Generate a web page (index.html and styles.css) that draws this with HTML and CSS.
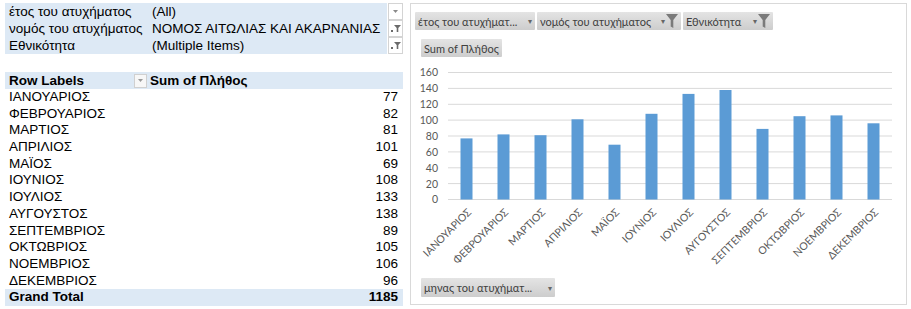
FILE: index.html
```html
<!DOCTYPE html>
<html lang="el">
  <head>
    <meta charset="UTF-8" />
    <title>Pivot - Πλήθος ατυχημάτων</title>
    <link rel="stylesheet" href="styles.css">
  </head>
  <body>
    <div class="page">
      <div class="pivot">
        <div class="filters">
          <div class="frow">
            <span class="fl">έτος του ατυχήματος</span>
            <span class="fv">(All)</span>
            <span class="fbtn"><svg width="7" height="5" viewBox="0 0 7 5"><path d="M1 1h5L3.5 4z" fill="#8a8a8a"/></svg></span>
          </div>
          <div class="frow">
            <span class="fl">νομός του ατυχήματος</span>
            <span class="fv">ΝΟΜΟΣ ΑΙΤΩΛΙΑΣ ΚΑΙ ΑΚΑΡΝΑΝΙΑΣ</span>
            <span class="fbtn"><svg width="10" height="9" viewBox="0 0 10 9"><rect x="0" y="6" width="2" height="2" fill="#6a6a6a"/><path d="M3 1h7L7.3 4v4H5.7V4z" fill="#6a6a6a"/></svg></span>
          </div>
          <div class="frow">
            <span class="fl">Εθνικότητα</span>
            <span class="fv">(Multiple Items)</span>
            <span class="fbtn"><svg width="10" height="9" viewBox="0 0 10 9"><rect x="0" y="6" width="2" height="2" fill="#6a6a6a"/><path d="M3 1h7L7.3 4v4H5.7V4z" fill="#6a6a6a"/></svg></span>
          </div>
        </div>

        <div class="table">
          <div class="hrow">
            <span class="hl">Row Labels <span class="hbtn"><svg width="7" height="5" viewBox="0 0 7 5"><path d="M1 1h5L3.5 4z" fill="#9a9a9a"/></svg></span></span>
            <span class="hv">Sum of Πλήθος</span>
          </div>
          <div class="row"><span>ΙΑΝΟΥΑΡΙΟΣ</span><span>77</span></div>
          <div class="row"><span>ΦΕΒΡΟΥΑΡΙΟΣ</span><span>82</span></div>
          <div class="row"><span>ΜΑΡΤΙΟΣ</span><span>81</span></div>
          <div class="row"><span>ΑΠΡΙΛΙΟΣ</span><span>101</span></div>
          <div class="row"><span>ΜΑΪΟΣ</span><span>69</span></div>
          <div class="row"><span>ΙΟΥΝΙΟΣ</span><span>108</span></div>
          <div class="row"><span>ΙΟΥΛΙΟΣ</span><span>133</span></div>
          <div class="row"><span>ΑΥΓΟΥΣΤΟΣ</span><span>138</span></div>
          <div class="row"><span>ΣΕΠΤΕΜΒΡΙΟΣ</span><span>89</span></div>
          <div class="row"><span>ΟΚΤΩΒΡΙΟΣ</span><span>105</span></div>
          <div class="row"><span>ΝΟΕΜΒΡΙΟΣ</span><span>106</span></div>
          <div class="row"><span>ΔΕΚΕΜΒΡΙΟΣ</span><span>96</span></div>
          <div class="row total"><span>Grand Total</span><span>1185</span></div>
        </div>
      </div>

      <div class="chart">
        <div class="fields">
          <span class="fbut w1">έτος του ατυχήματ... <i class="arr">▾</i></span>
          <span class="fbut w2">νομός του ατυχήματος <i class="arr">▾</i><svg class="funnel" width="12" height="14" viewBox="0 0 12 14"><path d="M0 0h12L7.3 6v8L4.7 12.5V6z" fill="#7a7a7a"/></svg></span>
          <span class="fbut w3">Εθνικότητα <i class="arr">▾</i><svg class="funnel" width="12" height="14" viewBox="0 0 12 14"><path d="M0 0h12L7.3 6v8L4.7 12.5V6z" fill="#7a7a7a"/></svg></span>
        </div>
        <div class="vals"><span class="fbut">Sum of Πλήθος</span></div>

        <svg class="plot" width="495" height="214" viewBox="0 0 495 214">
          <g stroke="#d9d9d9" stroke-width="1">
            <line x1="37" x2="481" y1="10.5" y2="10.5"/>
            <line x1="37" x2="481" y1="26.4" y2="26.4"/>
            <line x1="37" x2="481" y1="42.3" y2="42.3"/>
            <line x1="37" x2="481" y1="58.1" y2="58.1"/>
            <line x1="37" x2="481" y1="74" y2="74"/>
            <line x1="37" x2="481" y1="89.9" y2="89.9"/>
            <line x1="37" x2="481" y1="105.8" y2="105.8"/>
            <line x1="37" x2="481" y1="121.6" y2="121.6"/>
            <line x1="37" x2="481" y1="137.5" y2="137.5"/>
          </g>
          <g class="ylab" text-anchor="end">
            <text x="27" y="14">160</text>
            <text x="27" y="30">140</text>
            <text x="27" y="46">120</text>
            <text x="27" y="62">100</text>
            <text x="27" y="78">80</text>
            <text x="27" y="93.5">60</text>
            <text x="27" y="109.5">40</text>
            <text x="27" y="125.5">20</text>
            <text x="27" y="141">0</text>
          </g>
          <g fill="#5b9bd5">
            <rect x="49.5" y="76.4" width="12" height="61.1"/>
            <rect x="86.5" y="72.4" width="12" height="65.1"/>
            <rect x="123.5" y="73.2" width="12" height="64.3"/>
            <rect x="160.5" y="57.3" width="12" height="80.2"/>
            <rect x="197.5" y="82.7" width="12" height="54.8"/>
            <rect x="234.5" y="51.8" width="12" height="85.7"/>
            <rect x="271.5" y="31.9" width="12" height="105.6"/>
            <rect x="308.5" y="28" width="12" height="109.5"/>
            <rect x="345.5" y="66.9" width="12" height="70.6"/>
            <rect x="382.5" y="54.2" width="12" height="83.3"/>
            <rect x="419.5" y="53.4" width="12" height="84.1"/>
            <rect x="456.5" y="61.3" width="12" height="76.2"/>
          </g>
          <g class="xlab" text-anchor="end">
            <text transform="translate(61,151) rotate(-45)">ΙΑΝΟΥΑΡΙΟΣ</text>
            <text transform="translate(98,151) rotate(-45)">ΦΕΒΡΟΥΑΡΙΟΣ</text>
            <text transform="translate(135,151) rotate(-45)">ΜΑΡΤΙΟΣ</text>
            <text transform="translate(172,151) rotate(-45)">ΑΠΡΙΛΙΟΣ</text>
            <text transform="translate(209,151) rotate(-45)">ΜΑΪΟΣ</text>
            <text transform="translate(246,151) rotate(-45)">ΙΟΥΝΙΟΣ</text>
            <text transform="translate(283,151) rotate(-45)">ΙΟΥΛΙΟΣ</text>
            <text transform="translate(320,151) rotate(-45)">ΑΥΓΟΥΣΤΟΣ</text>
            <text transform="translate(357,151) rotate(-45)">ΣΕΠΤΕΜΒΡΙΟΣ</text>
            <text transform="translate(394,151) rotate(-45)">ΟΚΤΩΒΡΙΟΣ</text>
            <text transform="translate(431,151) rotate(-45)">ΝΟΕΜΒΡΙΟΣ</text>
            <text transform="translate(468,151) rotate(-45)">ΔΕΚΕΜΒΡΙΟΣ</text>
          </g>
        </svg>

        <div class="axis-field"><span class="fbut w4">μηνας του ατυχήματ... <i class="arr">▾</i></span></div>
      </div>
    </div>
  </body>
</html>
```

FILE: styles.css
```css
body {
  margin: 0;
  font-family: "Liberation Sans", Arial, sans-serif;
  font-size: 13.5px;
  color: #000;
  background-color: #fff;
}
.page {
  display: flex;
  padding: 3px 0 0 5px;
  gap: 7px;
}

/* pivot table */
.pivot {
  width: 398px;
}
.frow {
  display: grid;
  grid-template-columns: 147px 1fr 16px;
  height: 17px;
  line-height: 17px;
}
.fl, .fv {
  background-color: #dde9f5;
  white-space: nowrap;
}
.fl {
  padding-left: 4px;
}
.fbtn {
  margin-left: 1px;
  border: 1px solid #d4d4d4;
  background-color: #fff;
  display: flex;
  align-items: center;
  justify-content: center;
}
.table {
  margin-top: 18px;
}
.hrow {
  display: grid;
  grid-template-columns: 142px 1fr;
  height: 17px;
  line-height: 17px;
  background-color: #dde9f5;
  font-weight: bold;
}
.hl {
  display: flex;
  align-items: center;
  padding-left: 4px;
}
.hbtn {
  margin-left: auto;
  width: 13px;
  height: 14px;
  box-sizing: border-box;
  border: 1px solid #d0d0d0;
  background-color: #f7f7f7;
  display: flex;
  align-items: center;
  justify-content: center;
}
.hv {
  padding-left: 3px;
}
.row {
  display: flex;
  justify-content: space-between;
  height: 16.7px;
  line-height: 16.7px;
  padding: 0 5px 0 4px;
}
.row.total {
  background-color: #dde9f5;
  font-weight: bold;
}

/* chart */
.chart {
  width: 497px;
  height: 302px;
  box-sizing: border-box;
  border: 1px solid #d9d9d9;
  font-family: Lato, "Noto Sans", sans-serif;
  font-size: 11px;
  color: #404040;
}
.fields {
  display: flex;
  gap: 2px;
  margin: 8px 0 0 4px;
}
.fbut {
  display: inline-flex;
  align-items: center;
  height: 18px;
  box-sizing: border-box;
  padding: 0 3px;
  background: linear-gradient(#e4e4e4, #cdcdcd);
  border-radius: 1px;
  white-space: nowrap;
}
.arr {
  font-style: normal;
  font-size: 8px;
  color: #666;
  margin-left: auto;
  padding-left: 4px;
}
.funnel {
  margin-left: 1px;
}
.w1 { width: 120px; }
.w2 { width: 144px; }
.w3 { width: 90px; }
.w4 { width: 134px; height: 19px; }
.vals {
  margin: 9px 0 0 10px;
}
.plot {
  display: block;
  margin-top: 5px;
}
.ylab text {
  font-size: 10.5px;
  fill: #595959;
}
.xlab text {
  font-size: 10.5px;
  fill: #595959;
}
.axis-field {
  margin: 2px 0 0 10px;
}
```
